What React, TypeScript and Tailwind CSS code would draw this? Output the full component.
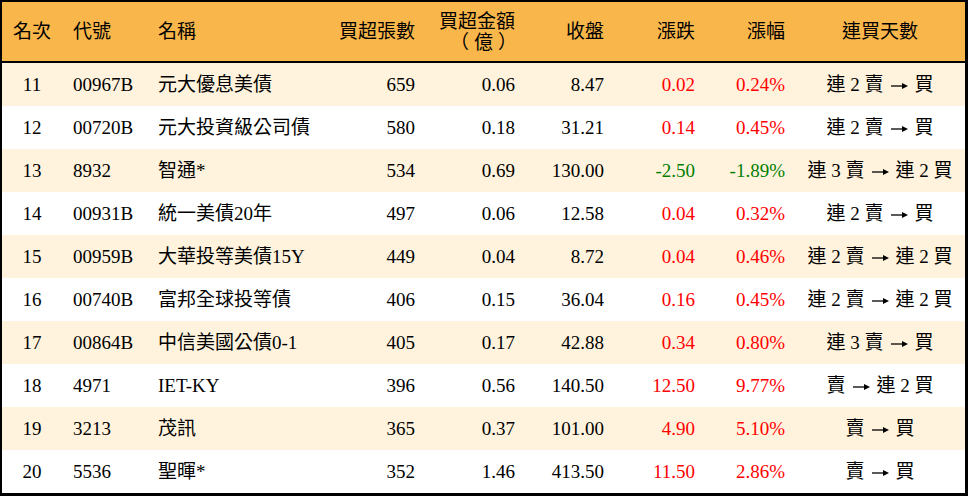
import React from 'react'

type Row = {
  rank: number
  code: string
  name: string
  lots: string
  amount: string
  close: string
  change: string
  pct: string
  streak: string
}

const rows: Row[] = [
  { rank: 11, code: '00967B', name: '元大優息美債', lots: '659', amount: '0.06', close: '8.47', change: '0.02', pct: '0.24%', streak: '連 2 賣 → 買' },
  { rank: 12, code: '00720B', name: '元大投資級公司債', lots: '580', amount: '0.18', close: '31.21', change: '0.14', pct: '0.45%', streak: '連 2 賣 → 買' },
  { rank: 13, code: '8932', name: '智通*', lots: '534', amount: '0.69', close: '130.00', change: '-2.50', pct: '-1.89%', streak: '連 3 賣 → 連 2 買' },
  { rank: 14, code: '00931B', name: '統一美債20年', lots: '497', amount: '0.06', close: '12.58', change: '0.04', pct: '0.32%', streak: '連 2 賣 → 買' },
  { rank: 15, code: '00959B', name: '大華投等美債15Y', lots: '449', amount: '0.04', close: '8.72', change: '0.04', pct: '0.46%', streak: '連 2 賣 → 連 2 買' },
  { rank: 16, code: '00740B', name: '富邦全球投等債', lots: '406', amount: '0.15', close: '36.04', change: '0.16', pct: '0.45%', streak: '連 2 賣 → 連 2 買' },
  { rank: 17, code: '00864B', name: '中信美國公債0-1', lots: '405', amount: '0.17', close: '42.88', change: '0.34', pct: '0.80%', streak: '連 3 賣 → 買' },
  { rank: 18, code: '4971', name: 'IET-KY', lots: '396', amount: '0.56', close: '140.50', change: '12.50', pct: '9.77%', streak: '賣 → 連 2 買' },
  { rank: 19, code: '3213', name: '茂訊', lots: '365', amount: '0.37', close: '101.00', change: '4.90', pct: '5.10%', streak: '賣 → 買' },
  { rank: 20, code: '5536', name: '聖暉*', lots: '352', amount: '1.46', close: '413.50', change: '11.50', pct: '2.86%', streak: '賣 → 買' },
]

const cols = 'grid grid-cols-[60px_88px_180px_95px_100px_89px_91px_90px_170px]'

function Streak({ text }: { text: string }) {
  const [from, to] = text.split(' → ')
  return (
    <div className="text-center whitespace-pre">
      {from}
      <svg width="17" height="10" viewBox="0 0 17 10" className="inline-block align-middle mx-[7px] -mt-[2px]">
        <path d="M0 5H14" stroke="#000" strokeWidth="1.3" />
        <path d="M11 2L17 5L11 8Z" fill="#000" />
      </svg>
      {to}
    </div>
  )
}

export default function App() {
  return (
    <div
      className="w-[968px] h-[496px] bg-white border-t-2 border-l-2 border-r-[3px] border-b-[3px] border-black text-black text-[19px] leading-none"
      style={{ fontFamily: '"Liberation Serif", "Noto Sans CJK TC", serif' }}
    >
      {/* 表頭 */}
      <div className={`${cols} h-[61px] bg-[#f9b74b] border-b-2 border-black items-center`}>
        <div className="text-center">名次</div>
        <div className="pl-[11px]">代號</div>
        <div className="pl-[8px]">名稱</div>
        <div className="text-right pr-[10px]">買超張數</div>
        <div className="text-right pr-[10px] leading-[21px]">
          <div>買超金額</div>
          <div className="mr-[-7px] tracking-[5px]">（億）</div>
        </div>
        <div className="text-right pr-[10px]">收盤</div>
        <div className="text-right pr-[10px]">漲跌</div>
        <div className="text-right pr-[10px]">漲幅</div>
        <div className="text-center">連買天數</div>
      </div>

      {rows.map((r, i) => {
        const down = r.change.startsWith('-')
        const color = down ? 'text-[#008000]' : 'text-[#ff0000]'
        return (
          <div
            key={r.rank}
            className={`${cols} h-[43px] items-center ${i % 2 === 0 ? 'bg-[#fff3dd]' : 'bg-white'}`}
          >
            <div className="text-center">{r.rank}</div>
            <div className="pl-[11px]">{r.code}</div>
            <div className="pl-[8px]">{r.name}</div>
            <div className="text-right pr-[10px]">{r.lots}</div>
            <div className="text-right pr-[10px]">{r.amount}</div>
            <div className="text-right pr-[10px]">{r.close}</div>
            <div className={`text-right pr-[10px] ${color}`}>{r.change}</div>
            <div className={`text-right pr-[10px] ${color}`}>{r.pct}</div>
            <Streak text={r.streak} />
          </div>
        )
      })}
    </div>
  )
}
